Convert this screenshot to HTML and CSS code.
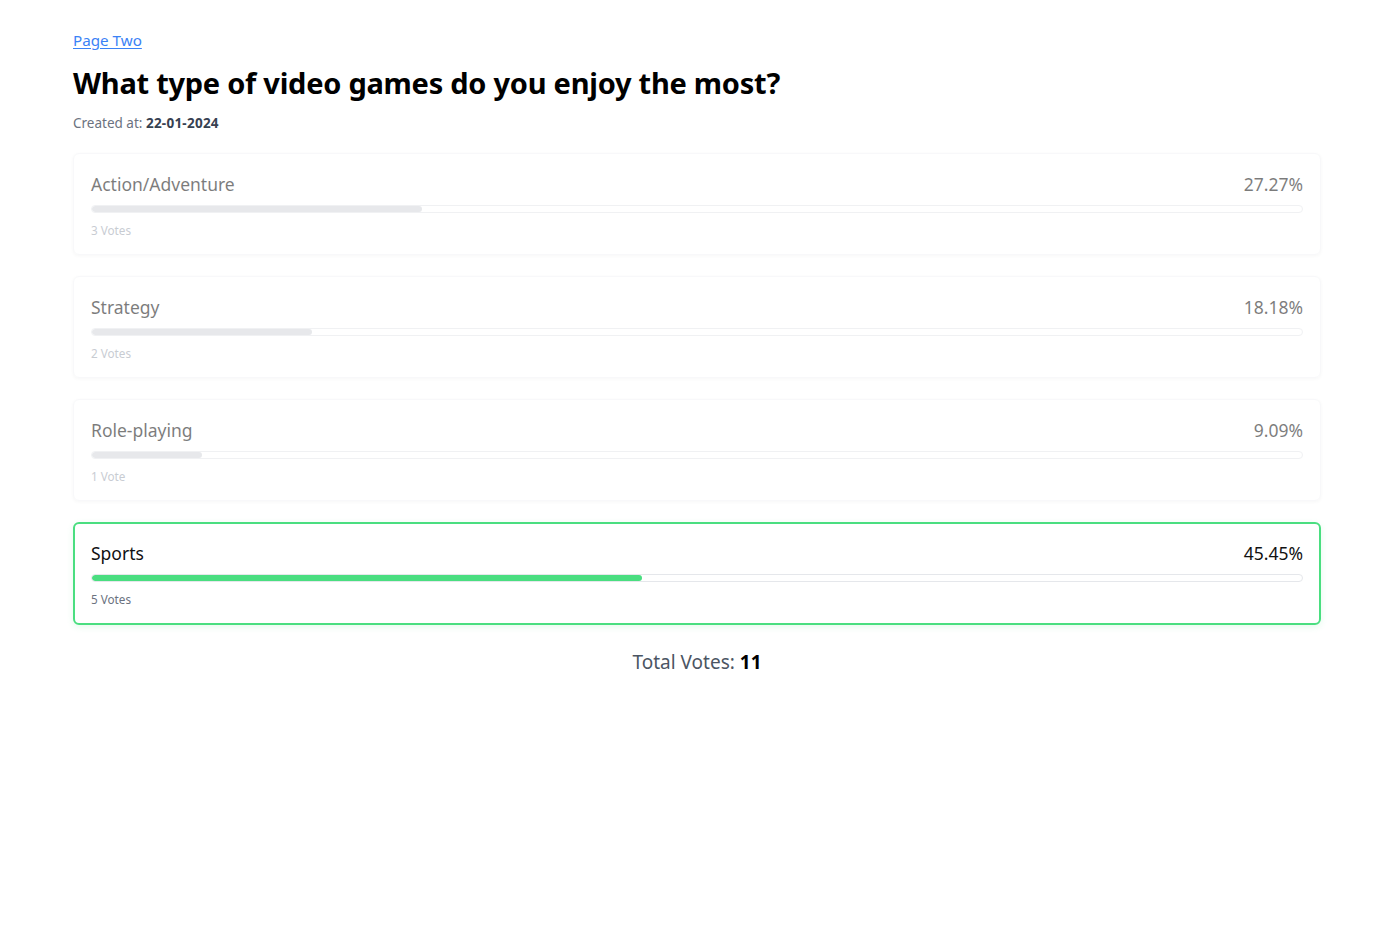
FILE: index.html
```html
<!DOCTYPE html>
<html lang="en">
<head>
<meta charset="utf-8">
<title>Poll</title>
<link rel="stylesheet" href="styles.css">
</head>
<body>
<main class="container">
  <a class="back-link" href="#">Page Two</a>
  <h1 class="title">What type of video games do you enjoy the most?</h1>
  <p class="created">Created at: <strong>22-01-2024</strong></p>

  <ul class="options">
    <li class="option">
      <div class="option-head"><span>Action/Adventure</span><span>27.27%</span></div>
      <div class="track"><div class="fill" style="width:27.27%"></div></div>
      <div class="votes">3 Votes</div>
    </li>
    <li class="option">
      <div class="option-head"><span>Strategy</span><span>18.18%</span></div>
      <div class="track"><div class="fill" style="width:18.18%"></div></div>
      <div class="votes">2 Votes</div>
    </li>
    <li class="option">
      <div class="option-head"><span>Role-playing</span><span>9.09%</span></div>
      <div class="track"><div class="fill" style="width:9.09%"></div></div>
      <div class="votes">1 Vote</div>
    </li>
    <li class="option winner">
      <div class="option-head"><span>Sports</span><span>45.45%</span></div>
      <div class="track"><div class="fill" style="width:45.45%"></div></div>
      <div class="votes">5 Votes</div>
    </li>
  </ul>

  <p class="total">Total Votes: <strong>11</strong></p>
</main>
</body>
</html>
```

FILE: styles.css
```css
* { box-sizing: border-box; }
html, body { margin: 0; padding: 0; background: #fff; }
body {
  font-family: "Noto Sans", "Open Sans", "Liberation Sans", sans-serif;
  color: #111827;
}
.container {
  width: 1248px;
  margin: 0 auto;
  padding-top: 28px;
}
.back-link {
  display: inline-block;
  font-size: 15.2px;
  line-height: 24px;
  color: #3b82f6;
  text-decoration: underline;
  text-underline-offset: 2px;
}
.title {
  margin: 13px 0 0;
  font-size: 29px;
  line-height: 36px;
  font-weight: 700;
  color: #000;
  letter-spacing: -0.25px;
}
.created {
  margin: 12px 0 0;
  font-size: 13.5px;
  line-height: 20px;
  color: #6b7280;
}
.created strong { color: #374151; font-weight: 700; letter-spacing: 0.25px; }
.options {
  list-style: none;
  margin: 20px 0 0;
  padding: 0;
  display: flex;
  flex-direction: column;
  gap: 21px;
}
.option {
  border: 1px solid #f3f4f6;
  border-radius: 6px;
  box-shadow: 0 1px 3px rgba(0,0,0,0.06);
  padding: 16px 17px 16px;
  opacity: 0.55;
}
.option-head {
  display: flex;
  justify-content: space-between;
  font-size: 17.5px;
  line-height: 28px;
  color: #111;
}
.track {
  margin-top: 7px;
  height: 8px;
  border: 1px solid #e5e7eb;
  border-radius: 9999px;
  overflow: hidden;
  background: #fff;
}
.fill {
  height: 100%;
  background: #d4d7dc;
  border-radius: 9999px;
}
.votes {
  margin-top: 9px;
  font-size: 11.7px;
  line-height: 16px;
  color: #9ca3af;
}
.option.winner {
  opacity: 1;
  border: 2px solid #4ade80;
  padding: 15px 16px 16px;
  box-shadow: 0 2px 6px rgba(74,222,128,0.15);
}
.winner .fill { background: #4ade80; }
.winner .votes { color: #6b7280; }
.total {
  margin: 23px 0 0;
  text-align: center;
  font-size: 19px;
  line-height: 28px;
  color: #4b5563;
}
.total strong { color: #000; font-weight: 700; }
```
